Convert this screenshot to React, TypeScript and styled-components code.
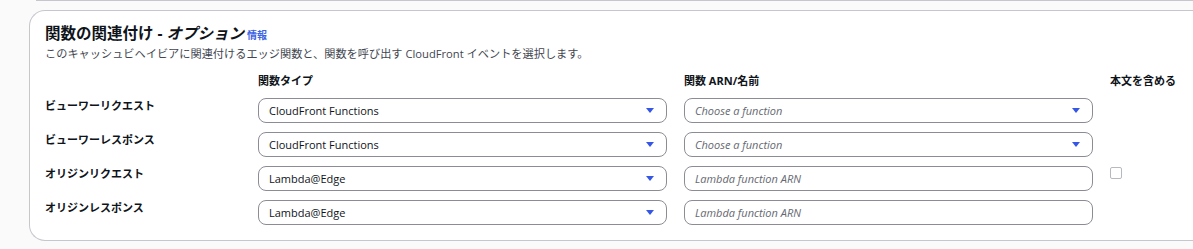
import React from "react";
import styled, { createGlobalStyle } from "styled-components";

const GlobalStyle = createGlobalStyle`
  html, body { margin: 0; padding: 0; }
  body {
    background: #fafafa;
    overflow: hidden;
    font-family: "Open Sans", "Noto Sans CJK JP", sans-serif;
    color: #0f141a;
  }
`;

const Page = styled.div`
  display: flex;
  flex-direction: column;
  gap: 9px;
  width: 1240px;
`;

const PrevCardEdge = styled.div`
  height: 0;
  margin-left: 36px;
  border-bottom: 1px solid #c6c6cd;
`;

const Card = styled.section`
  margin-left: 29px;
  background: #ffffff;
  border: 1px solid #c6c6cd;
  border-right: none;
  border-radius: 16px 0 0 16px;
  padding: 12px 0 15px 15px;
  display: flex;
  flex-direction: column;
`;

const TitleRow = styled.div`
  display: flex;
  align-items: baseline;
  gap: 3px;
  line-height: 20px;
`;

const Title = styled.h2`
  margin: 0;
  font-size: 15.5px;
  font-weight: 700;
  font-family: "Open Sans", "Noto Sans CJK JP", sans-serif;
  color: #0f141a;
  em { font-style: italic; }
`;

const InfoLink = styled.a`
  font-size: 10px;
  font-weight: 700;
  color: #3b63e3;
  text-decoration: none;
`;

const Description = styled.p`
  margin: 1px 0 0;
  font-size: 11.2px;
  line-height: 16px;
  color: #424650;
`;

const Grid = styled.div`
  margin-top: 11px;
  display: grid;
  grid-template-columns: 196px 409px 409px auto;
  column-gap: 17px;
  row-gap: 9px;
  align-items: start;
`;

const HeaderCell = styled.div`
  font-size: 11px;
  font-weight: 700;
  line-height: 16px;
  color: #0f141a;
`;

const RowLabel = styled.div`
  font-size: 11px;
  font-weight: 700;
  line-height: 16px;
  color: #0f141a;
`;

const Field = styled.div<{ $placeholder?: boolean }>`
  box-sizing: border-box;
  height: 25px;
  border: 1px solid #8c8c94;
  border-radius: 8px;
  padding: 0 12px 0 10px;
  display: flex;
  align-items: center;
  justify-content: space-between;
  font-size: 11px;
  font-style: ${(p) => (p.$placeholder ? "italic" : "normal")};
  color: ${(p) => (p.$placeholder ? "#656871" : "#0f141a")};
  background: #ffffff;
`;

const Caret = styled.span`
  width: 0;
  height: 0;
  border-left: 4px solid transparent;
  border-right: 4px solid transparent;
  border-top: 5px solid #3556e6;
`;

const Checkbox = styled.span`
  display: block;
  box-sizing: border-box;
  width: 12px;
  height: 12px;
  margin-top: 1px;
  border: 1px solid #b8b8c0;
  border-radius: 2px;
  background: #ffffff;
`;

type Row = {
  label: string;
  type: string;
  arn: string;
  arnSelect: boolean;
  checkbox: boolean;
};

const rows: Row[] = [
  { label: "ビューワーリクエスト", type: "CloudFront Functions", arn: "Choose a function", arnSelect: true, checkbox: false },
  { label: "ビューワーレスポンス", type: "CloudFront Functions", arn: "Choose a function", arnSelect: true, checkbox: false },
  { label: "オリジンリクエスト", type: "Lambda@Edge", arn: "Lambda function ARN", arnSelect: false, checkbox: true },
  { label: "オリジンレスポンス", type: "Lambda@Edge", arn: "Lambda function ARN", arnSelect: false, checkbox: false },
];

export default function App() {
  return (
    <>
      <GlobalStyle />
      <Page>
        <PrevCardEdge />
        <Card>
          <TitleRow>
            <Title>
              関数の関連付け - <em>オプション</em>
            </Title>
            <InfoLink href="#">情報</InfoLink>
          </TitleRow>
          <Description>
            このキャッシュビヘイビアに関連付けるエッジ関数と、関数を呼び出す CloudFront イベントを選択します。
          </Description>
          <Grid>
            <div />
            <HeaderCell>関数タイプ</HeaderCell>
            <HeaderCell>関数 ARN/名前</HeaderCell>
            <HeaderCell>本文を含める</HeaderCell>
            {rows.map((r) => (
              <React.Fragment key={r.label}>
                <RowLabel>{r.label}</RowLabel>
                <Field>
                  <span>{r.type}</span>
                  <Caret />
                </Field>
                <Field $placeholder>
                  <span>{r.arn}</span>
                  {r.arnSelect && <Caret />}
                </Field>
                <div>{r.checkbox && <Checkbox />}</div>
              </React.Fragment>
            ))}
          </Grid>
        </Card>
      </Page>
    </>
  );
}
